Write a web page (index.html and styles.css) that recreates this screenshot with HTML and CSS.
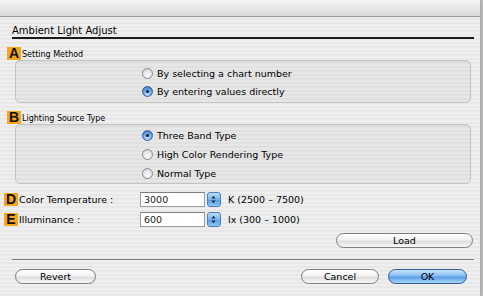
FILE: index.html
```html
<!DOCTYPE html>
<html>
<head>
<meta charset="utf-8">
<link rel="stylesheet" href="styles.css">
</head>
<body>
<div class="window">
  <div class="titlebar"></div>
  <div class="content">
    <div class="heading">Ambient Light Adjust</div>

    <div class="section-label"><span class="badge">A</span><span class="label-text">Setting Method</span></div>
    <div class="group group-a">
      <div class="radio-row"><span class="radio"></span><span>By selecting a chart number</span></div>
      <div class="radio-row"><span class="radio on"></span><span>By entering values directly</span></div>
    </div>

    <div class="section-label label-b"><span class="badge">B</span><span class="label-text">Lighting Source Type</span></div>
    <div class="group group-b">
      <div class="radio-row"><span class="radio on"></span><span>Three Band Type</span></div>
      <div class="radio-row"><span class="radio"></span><span>High Color Rendering Type</span></div>
      <div class="radio-row"><span class="radio"></span><span>Normal Type</span></div>
    </div>

    <div class="field-row row-d">
      <span class="badge">D</span><span class="field-label">Color Temperature :</span>
      <span class="input">3000</span>
      <span class="stepper"><svg width="14" height="15" viewBox="0 0 14 15"><path d="M7 3.5 L9.2 6.3 H4.8 Z M7 11.5 L9.2 8.7 H4.8 Z" fill="#1a2a44"/></svg></span>
      <span class="range">K (2500 – 7500)</span>
    </div>
    <div class="field-row row-e">
      <span class="badge">E</span><span class="field-label">Illuminance :</span>
      <span class="input">600</span>
      <span class="stepper"><svg width="14" height="15" viewBox="0 0 14 15"><path d="M7 3.5 L9.2 6.3 H4.8 Z M7 11.5 L9.2 8.7 H4.8 Z" fill="#1a2a44"/></svg></span>
      <span class="range">lx (300 – 1000)</span>
    </div>

    <div class="load-row"><span class="btn load">Load</span></div>
    <div class="buttons">
      <span class="btn revert">Revert</span>
      <span class="spacer"></span>
      <span class="btn cancel">Cancel</span>
      <span class="btn ok">OK</span>
    </div>
  </div>
</div>
</body>
</html>
```

FILE: styles.css
```css
html, body {
  margin: 0;
  padding: 0;
  width: 483px;
  height: 296px;
  overflow: hidden;
  background: #c9c9c9;
}
body {
  font-family: "DejaVu Sans", "Liberation Sans", sans-serif;
  font-size: 9.5px;
  color: #000;
}
.window {
  width: 480px;
  height: 296px;
  background: repeating-linear-gradient(to bottom, #efefef 0px, #efefef 2px, #e8e8e8 2px, #e8e8e8 4px);
  border-right: 1px solid #b0b0b0;
  box-shadow: 1px 0 2px rgba(0,0,0,0.2);
}
.titlebar {
  height: 16px;
  background: linear-gradient(to bottom, #f6f6f6, #d9d9d9);
  border-bottom: 1px solid #9b9b9b;
  border-top-right-radius: 4px;
}
.content {
  display: flex;
  flex-direction: column;
}
.heading {
  margin: 8px 6px 0 12px;
  height: 12px;
  line-height: 12px;
  font-size: 10px;
  border-bottom: 2px solid #1a1a1a;
}
.section-label {
  display: flex;
  align-items: flex-end;
  margin: 8px 0 0 7px;
  height: 13px;
}
.label-b { margin-top: 9px; height: 12px; }
.badge {
  display: inline-flex;
  align-items: center;
  justify-content: center;
  width: 14px;
  height: 13px;
  background: #f6a51e;
  font-family: "Liberation Sans", sans-serif;
  font-weight: bold;
  font-size: 14px;
  line-height: 13px;
  color: #111;
}
.label-text {
  font-size: 8px;
  margin-left: 1px;
  line-height: 10px;
}
.group {
  margin: 0 9px 0 15px;
  border: 1px solid #c4c4c4;
  border-radius: 5px;
  background: rgba(0,0,0,0.03);
  box-shadow: inset 0 1px 1px rgba(0,0,0,0.06);
  display: flex;
  flex-direction: column;
  padding-left: 126px;
  box-sizing: border-box;
}
.group-a { height: 43px; padding-top: 7px; gap: 8px; }
.group-b { height: 60px; padding-top: 5px; gap: 9px; }
.radio-row {
  display: flex;
  align-items: center;
  height: 10px;
  gap: 4px;
}
.radio {
  width: 9px;
  height: 9px;
  border-radius: 50%;
  border: 1px solid #8a8a8a;
  background: radial-gradient(circle at 50% 70%, #ffffff 0%, #e4e4e4 55%, #c8c8c8 100%);
  position: relative;
}
.radio.on {
  border-color: #3a5f9a;
  background: radial-gradient(circle at 50% 75%, #c6e2ff 0%, #6aa6e8 50%, #2e6cc4 100%);
}
.radio.on::after {
  content: "";
  position: absolute;
  left: 3px;
  top: 3px;
  width: 3px;
  height: 3px;
  border-radius: 50%;
  background: #0c1a33;
}
.field-row {
  display: flex;
  align-items: center;
  height: 15px;
  margin-left: 4px;
}
.row-d { margin-top: 8px; }
.row-e { margin-top: 5px; }
.field-label {
  width: 121px;
  margin-left: 1px;
}
.input {
  width: 60px;
  height: 13px;
  line-height: 13px;
  border: 1px solid #9d9d9d;
  border-top-color: #7d7d7d;
  background: #fff;
  padding-left: 3px;
  color: #222;
}
.stepper {
  width: 14px;
  height: 15px;
  margin-left: 2px;
  border-radius: 3px;
  background: linear-gradient(to bottom, #bcdcfa 0%, #7ab4ec 50%, #5c9fe6 55%, #8cc6f6 100%);
  border: 1px solid #4f7fb8;
  box-sizing: border-box;
  display: flex;
  overflow: hidden;
}
.stepper svg { display: block; margin-left: -1px; margin-top: -1px; }
.range { margin-left: 7px; }
.load-row {
  display: flex;
  justify-content: flex-end;
  margin: 6px 7px 0 0;
  padding-bottom: 11px;
  margin-left: 12px;
  margin-right: 6px;
  padding-right: 1px;
  border-bottom: 1px solid #7f7f7f;
}
.btn {
  display: inline-flex;
  align-items: center;
  justify-content: center;
  height: 15px;
  box-sizing: border-box;
  border: 1px solid #7c7c7c;
  border-radius: 8px;
  background: linear-gradient(to bottom, #ffffff 0%, #f2f2f2 45%, #dedede 55%, #f7f7f7 100%);
}
.load { width: 137px; }
.buttons {
  display: flex;
  margin: 9px 0 0 15px;
}
.revert { width: 81px; }
.spacer { flex: 1; }
.cancel { width: 78px; }
.ok {
  width: 79px;
  margin-left: 9px;
  margin-right: 13px;
  border-color: #33598f;
  background: linear-gradient(to bottom, #c9e4fd 0%, #86bdf0 45%, #5a9ee6 55%, #a8d6fb 100%);
}
```
